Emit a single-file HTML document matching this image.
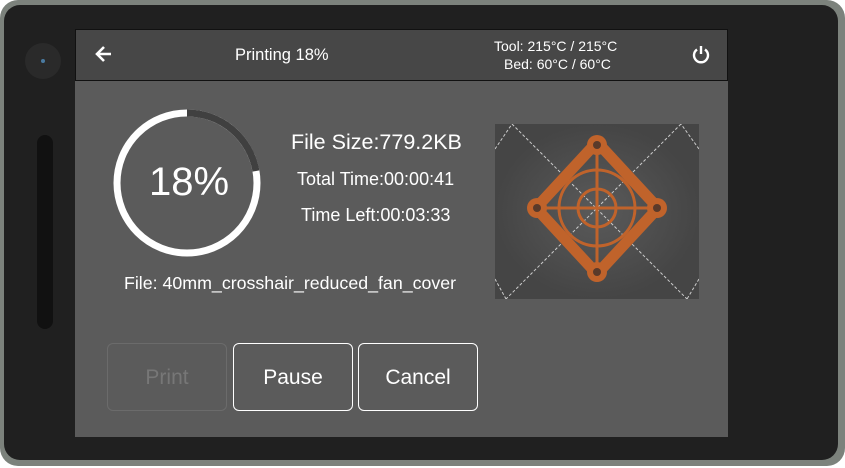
<!DOCTYPE html><html><head><style>
body{margin:0;width:845px;height:468px;background:#fff;overflow:hidden;font-family:"Liberation Sans",sans-serif;position:relative}
.frame{position:absolute;left:0;top:0;width:845px;height:466px;background:#7c827c;border-radius:18px}
.inner{position:absolute;left:4px;top:5px;width:834px;height:455px;background:#202020;border-radius:16px}
.screen{position:absolute;left:75px;top:29px;width:653px;height:408px;background:#5b5b5b}
.hdr{position:absolute;left:75px;top:29px;width:651px;height:50px;background:#474747;border:1px solid #111;color:#fff}
.t{position:absolute;color:#fff;white-space:nowrap}
.btn{position:absolute;top:343px;width:118px;height:66px;border:1.5px solid #fff;border-radius:6px;color:#fff;font-size:21px;text-align:center;line-height:68px}
</style></head><body>
<div class="frame"></div><div class="inner"></div>
<div style="position:absolute;left:25px;top:43px;width:36px;height:36px;border-radius:50%;background:#2a2a2a"></div>
<div style="position:absolute;left:41px;top:59px;width:4px;height:4px;border-radius:50%;background:#4a7aa0"></div>
<div style="position:absolute;left:37px;top:135px;width:16px;height:194px;border-radius:8px;background:#111"></div>
<div class="screen"></div>
<div class="hdr">
<svg style="position:absolute;left:18px;top:14px" width="20" height="20" viewBox="0 0 20 20"><path d="M17 10H4M10 3L3 10l7 7" stroke="#fff" stroke-width="2.6" fill="none"/></svg>
<div class="t" style="left:159px;top:16px;font-size:16.5px">Printing 18%</div>
<div class="t" style="left:418px;top:8px;font-size:14px">Tool: 215°C / 215°C</div>
<div class="t" style="left:428px;top:26px;font-size:14px">Bed: 60°C / 60°C</div>
<svg style="position:absolute;left:615px;top:14px" width="20" height="20" viewBox="0 0 20 20"><path d="M6 5.5A7 7 0 1 0 14 5.5" stroke="#fff" stroke-width="2.4" fill="none"/><path d="M10 2v8" stroke="#fff" stroke-width="2.4"/></svg>
</div>
<svg style="position:absolute;left:112px;top:108px" width="150" height="150" viewBox="0 0 150 150">
<circle cx="75" cy="75" r="70" stroke="#fff" stroke-width="7" fill="none"/>
<path d="M75 5A70 70 0 0 1 144 63" stroke="#404040" stroke-width="7" fill="none"/>
</svg>
<div class="t" style="left:149px;top:160px;font-size:40px">18%</div>
<div class="t" style="left:291px;top:130px;font-size:21.5px">File Size:779.2KB</div>
<div class="t" style="left:297px;top:169px;font-size:18px">Total Time:00:00:41</div>
<div class="t" style="left:301px;top:205px;font-size:18px">Time Left:00:03:33</div>
<div class="t" style="left:124px;top:273px;font-size:17.8px">File: 40mm_crosshair_reduced_fan_cover</div>
<svg style="position:absolute;left:495px;top:124px" width="204" height="175" viewBox="0 0 204 175">
<defs><radialGradient id="g"><stop offset="0" stop-color="#5a5a5a"/><stop offset="1" stop-color="#454545"/></radialGradient></defs>
<rect width="204" height="175" fill="url(#g)"/>
<path d="M17 0L192 175M186 0L11 175M0 25L17 0M204 25L186 0M0 155L11 175M204 155L192 175" stroke="#ccc" stroke-width="1" stroke-dasharray="3 2" fill="none"/>
<g fill="none" stroke="#c0632b">
<path d="M102 18L163 84L102 150L41 84Z" stroke-width="11" stroke-linejoin="round"/>
<circle cx="102" cy="84" r="38" stroke-width="3"/><circle cx="102" cy="84" r="19" stroke-width="3"/>
<path d="M102 24V146M47 84H157" stroke-width="3"/>
</g>
<g fill="#c0632b"><circle cx="102" cy="21" r="10"/><circle cx="102" cy="148" r="10"/><circle cx="42" cy="84" r="10"/><circle cx="162" cy="84" r="10"/></g>
<g fill="#5a3a2a"><circle cx="102" cy="21" r="4"/><circle cx="102" cy="148" r="4"/><circle cx="42" cy="84" r="4"/><circle cx="162" cy="84" r="4"/></g>
</svg>
<div class="btn" style="left:107px;border-color:#6b6b6b;color:#777">Print</div>
<div class="btn" style="left:233px">Pause</div>
<div class="btn" style="left:358px">Cancel</div>
</body></html>
